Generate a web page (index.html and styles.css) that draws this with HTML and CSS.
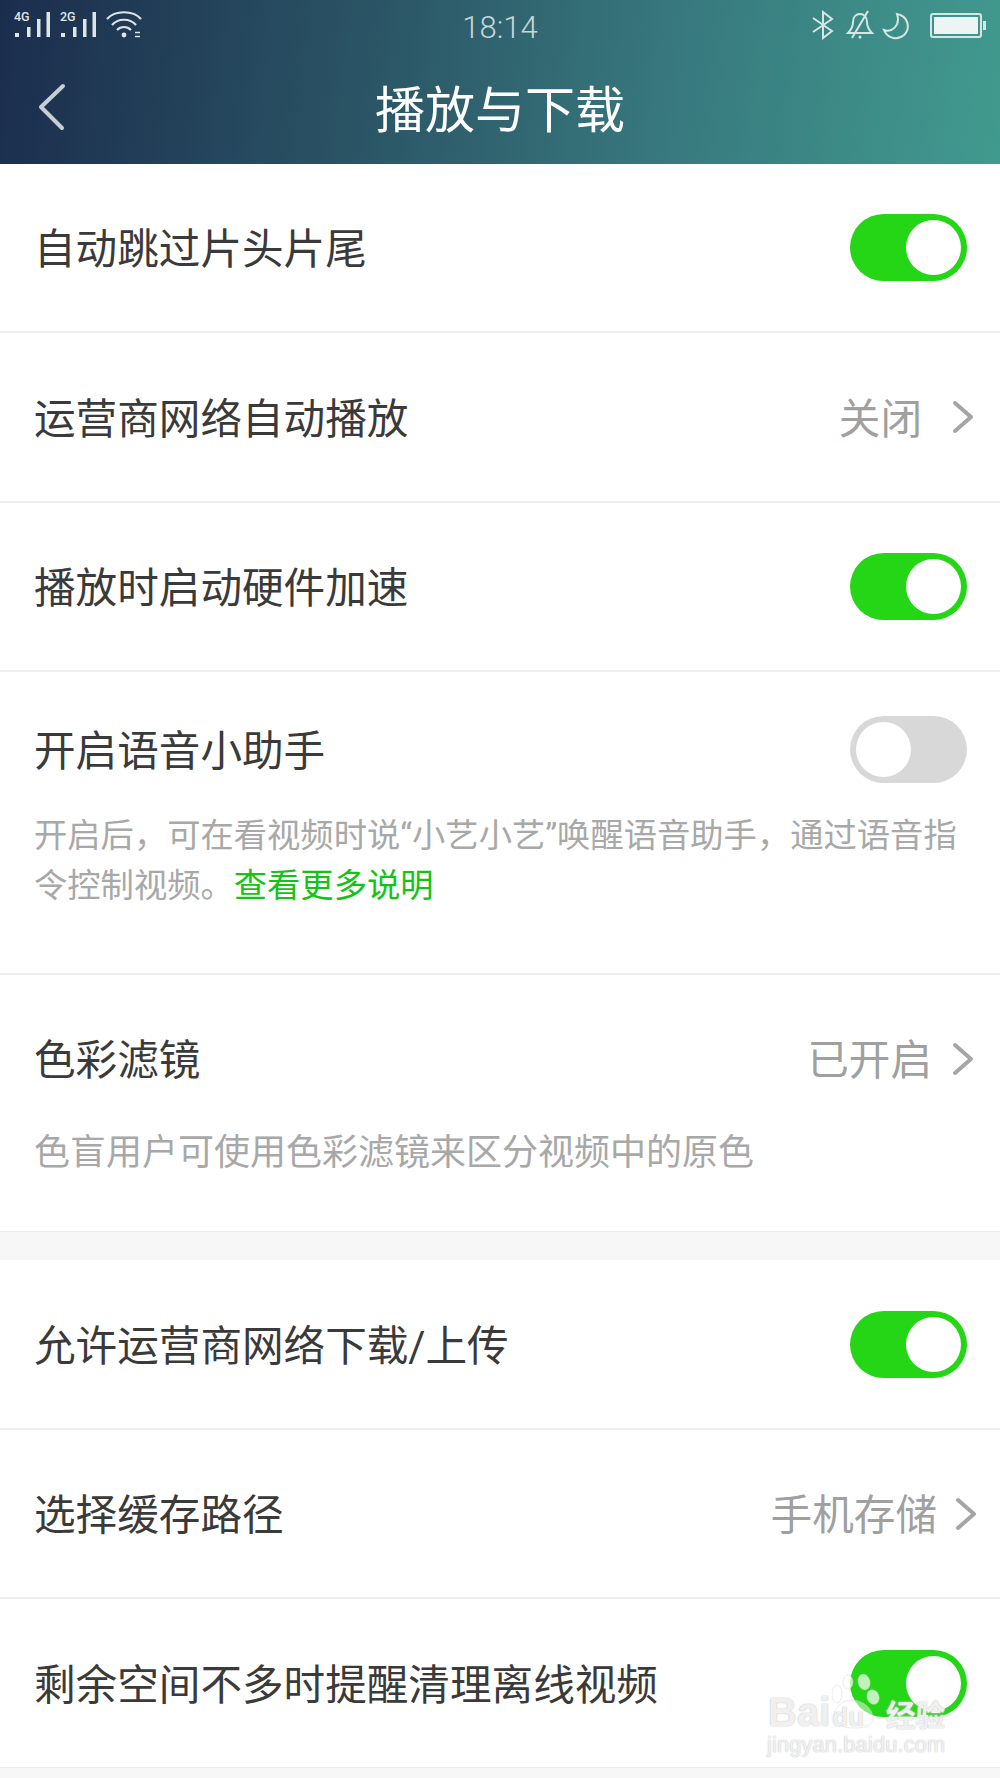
FILE: index.html
```html
<!DOCTYPE html>
<html lang="zh-CN">

<head>
    <meta charset="UTF-8" />
    <title>播放与下载</title>
    <link rel="stylesheet" href="styles.css">
</head>

<body>
    <div class="phone">
        <header class="top">
            <div class="status">
                <div class="status-side left">
                    <svg width="36" height="28" viewBox="0 0 36 28">
                        <text x="0" y="11" class="net">4G</text>
                        <g fill="#dfe4e6">
                            <rect x="1" y="23" width="4" height="4" />
                            <rect x="13" y="17" width="3.5" height="10" />
                            <rect x="23" y="9" width="3.5" height="18" />
                            <rect x="32.5" y="2" width="3.5" height="25" />
                        </g>
                    </svg>
                    <svg width="36" height="28" viewBox="0 0 36 28">
                        <text x="0" y="11" class="net">2G</text>
                        <g fill="#dfe4e6">
                            <rect x="1" y="23" width="4" height="4" />
                            <rect x="13" y="17" width="3.5" height="10" />
                            <rect x="23" y="9" width="3.5" height="18" />
                            <rect x="32.5" y="2" width="3.5" height="25" />
                        </g>
                    </svg>
                    <svg width="36" height="28" viewBox="0 0 36 28" fill="none" stroke="#dfe4e6" stroke-width="2.2">
                        <path d="M1 9 C9 0 27 0 35 9" />
                        <path d="M6 15 C12 8 24 8 30 15" />
                        <path d="M11 20 C15 16 21 16 25 20" />
                        <circle cx="18" cy="25" r="2.4" fill="#dfe4e6" stroke="none" />
                        <path d="M29 22.5 h5 M29 26.5 h5" stroke-width="1.6" />
                    </svg>
                </div>
                <div class="clock">18:14</div>
                <div class="status-side right">
                    <svg width="24" height="30" viewBox="0 0 24 30" fill="none" stroke="#d6e6e4" stroke-width="2">
                        <path d="M2 8 L21 21 L12 28 V2 L21 9 L2 22" />
                    </svg>
                    <svg class="bell" width="28" height="30" viewBox="0 0 28 30" fill="none" stroke="#d6e6e4" stroke-width="2">
                        <path d="M2 23 C6 19 7 16 7 12 C7 7 10 4 14 4 C18 4 21 7 21 12 C21 16 22 19 26 23 Z" />
                        <path d="M22 1 L6 28" />
                        <circle cx="14" cy="27" r="1.5" fill="#d6e6e4" stroke="none" />
                    </svg>
                    <svg class="moon" width="28" height="28" viewBox="0 0 28 28" fill="none" stroke="#d6e6e4" stroke-width="2">
                        <path d="M15 2 C26 4 29 16 22 23 C15 29 5 26 2 18 C9 21 19 14 15 2 Z" />
                    </svg>
                    <div class="battery"><span class="battery-fill"></span></div>
                </div>
            </div>
            <div class="nav">
                <svg class="back" width="30" height="48" viewBox="0 0 30 48" fill="none" stroke="#c6cfd3" stroke-width="4" stroke-linecap="round" stroke-linejoin="round">
                    <path d="M25 3 L3 24 L24 45" />
                </svg>
                <h1>播放与下载</h1>
            </div>
        </header>

        <section class="group">
            <div class="row">
                <span class="label">自动跳过片头片尾</span>
                <span class="switch on"></span>
            </div>
            <div class="row high">
                <span class="label">运营商网络自动播放</span>
                <span class="value">关闭</span>
                <svg class="arrow" width="22" height="34" viewBox="0 0 22 34" fill="none" stroke="#a5a5a5" stroke-width="4" stroke-linecap="round" stroke-linejoin="round"><path d="M3 3 L19 17 L3 31" /></svg>
            </div>
            <div class="row">
                <span class="label">播放时启动硬件加速</span>
                <span class="switch on"></span>
            </div>
            <div class="row tall voice">
                <div class="row-head">
                    <span class="label">开启语音小助手</span>
                    <span class="switch"></span>
                </div>
                <p class="note">开启后，可在看视频时说“小艺小艺”唤醒语音助手，通过语音指令控制视频。<a class="more">查看更多说明</a></p>
            </div>
            <div class="row tall filter">
                <div class="row-head">
                    <span class="label">色彩滤镜</span>
                    <span class="value near">已开启</span>
                    <svg class="arrow" width="22" height="34" viewBox="0 0 22 34" fill="none" stroke="#a5a5a5" stroke-width="4" stroke-linecap="round" stroke-linejoin="round"><path d="M3 3 L19 17 L3 31" /></svg>
                </div>
                <p class="note big">色盲用户可使用色彩滤镜来区分视频中的原色</p>
            </div>
        </section>

        <section class="group second">
            <div class="row high">
                <span class="label">允许运营商网络下载/上传</span>
                <span class="switch on"></span>
            </div>
            <div class="row">
                <span class="label">选择缓存路径</span>
                <span class="value nearest">手机存储</span>
                <svg class="arrow outer" width="22" height="34" viewBox="0 0 22 34" fill="none" stroke="#a5a5a5" stroke-width="4" stroke-linecap="round" stroke-linejoin="round"><path d="M3 3 L19 17 L3 31" /></svg>
            </div>
            <div class="row last">
                <span class="label">剩余空间不多时提醒清理离线视频</span>
                <span class="switch on"></span>
            </div>
        </section>

        <!-- watermark sits over the last row -->
        <div class="mark">
            <svg class="paw" width="50" height="60" viewBox="0 0 50 60" fill="#fff" fill-opacity="0.7" stroke="#ccc" stroke-opacity="0.4">
                <ellipse cx="5" cy="20" rx="5" ry="9" />
                <ellipse cx="16" cy="8" rx="5" ry="7" />
                <ellipse cx="32" cy="8" rx="6" ry="8" transform="rotate(-15 32 8)" />
                <ellipse cx="41" cy="23" rx="6" ry="7.5" transform="rotate(-20 41 23)" />
                <path fill-opacity="0.45" d="M2 42 C2 34 10 26 20 26 C30 26 41 34 41 44 C41 52 32 54 22 54 C10 54 2 50 2 42 Z" />
            </svg>
            <div class="mark-main"><span class="mark-bai">Bai</span><span class="mark-du">du</span><span class="mark-jy">经验</span></div>
            <div class="mark-url">jingyan.baidu.com</div>
        </div>
    </div>
</body>

</html>
```

FILE: styles.css
```css
* {
    box-sizing: border-box;
    margin: 0;
    padding: 0;
}

body {
    font-family: 'Roboto', 'Noto Sans CJK SC', sans-serif;
    background-color: #f7f7f7;
    color: #3a3a3a;
}

.phone {
    position: relative;
    width: 1000px;
    height: 1778px;
    overflow: hidden;
    background-color: #f7f7f7;
}

/* Top bar */
.top {
    height: 164px;
    background: linear-gradient(97deg, #1b2d4d 0%, #2b5666 38%, #387a7f 68%, #419a8e 100%);
    color: #fff;
}

.status {
    height: 52px;
    padding: 10px 15px 0 14px;
    display: flex;
    justify-content: space-between;
    align-items: flex-start;
}

.status-side {
    display: flex;
    align-items: flex-start;
}

.status-side.left {
    gap: 10px;
}

.status-side.right {
    gap: 8px;
}

.net {
    font-family: 'Roboto', sans-serif;
    font-size: 12.5px;
    font-weight: 500;
    fill: #dfe4e6;
}

.clock {
    position: absolute;
    left: 0;
    right: 0;
    top: 9px;
    text-align: center;
    font-size: 31px;
    font-weight: 300;
    color: #c9d6d8;
}

.bell {
    margin-left: 3px;
}

.moon {
    margin-top: 2px;
}

.battery {
    width: 52px;
    height: 25px;
    margin: 3px 3px 0 12px;
    border: 2px solid #d6e6e4;
    border-radius: 3px;
    padding: 2px;
    position: relative;
}

.battery::after {
    content: '';
    position: absolute;
    right: -6px;
    top: 6px;
    width: 3px;
    height: 9px;
    background-color: #d6e6e4;
}

.battery-fill {
    display: block;
    height: 100%;
    background-color: #edf5f4;
}

.nav {
    height: 112px;
    display: flex;
    align-items: center;
    justify-content: center;
    position: relative;
}

.back {
    position: absolute;
    left: 38px;
    top: 31px;
}

.nav h1 {
    font-size: 50px;
    font-weight: 400;
    margin-top: -4px;
}

/* Rows */
.group {
    background-color: #fff;
    border-bottom: 1px solid #ececec;
}

.second {
    margin-top: 28px;
}

.row {
    height: 169px;
    padding: 0 34px;
    display: flex;
    align-items: center;
    border-bottom: 2px solid #efefef;
}

.row.high {
    height: 170px;
}

.row.last {
    height: 168px;
    border-bottom: none;
}

.row.tall {
    display: block;
}

.voice {
    height: 303px;
    padding-top: 44px;
}

.filter {
    height: 256px;
    padding-top: 50px;
    border-bottom: none;
}

.row-head {
    display: flex;
    align-items: center;
    height: 67px;
}

.label {
    flex: 1;
    font-size: 41.6px;
    color: #3a3a3a;
    white-space: nowrap;
    margin-bottom: 3px;
}

.value {
    font-size: 41.6px;
    color: #a0a0a0;
    margin-right: 30px;
    margin-bottom: 3px;
}

.value.near {
    margin-right: 20px;
}

.value.nearest {
    margin-right: 18px;
}

.arrow {
    margin-right: -8px;
}

.arrow.outer {
    margin-right: -11px;
}

.note {
    font-size: 33.3px;
    line-height: 50px;
    color: #a8a8a8;
    margin-top: 28px;
}

.note.big {
    font-size: 36px;
    margin-top: 36px;
}

.more {
    color: #14c414;
}

/* Switch */
.switch {
    position: relative;
    flex: none;
    width: 117px;
    height: 67px;
    margin-right: -1px;
    border-radius: 34px;
    background-color: #d8d8d8;
}

.switch::after {
    content: '';
    position: absolute;
    left: 6px;
    top: 6px;
    width: 55px;
    height: 55px;
    border-radius: 50%;
    background-color: #fff;
}

.switch.on {
    background-color: #25d616;
}

.switch.on::after {
    left: 56px;
}

/* Watermark */
.mark {
    position: absolute;
    left: 766px;
    top: 1669px;
    width: 190px;
    height: 100px;
    color: rgba(255, 255, 255, 0.8);
    text-shadow: 0 0 1px #bbb, 0 0 2px #ddd;
}

.paw {
    position: absolute;
    left: 66px;
    top: 5px;
}

.mark-main {
    position: absolute;
    left: 2px;
    top: 25px;
    white-space: nowrap;
    font-size: 40px;
    line-height: 36px;
    font-family: 'Liberation Sans', sans-serif;
    font-weight: 700;
}

.mark-du {
    font-size: 26px;
    margin-left: 2px;
}

.mark-jy {
    font-family: 'Noto Sans CJK SC', sans-serif;
    font-size: 29.5px;
    line-height: 36px;
    margin-left: 22px;
}

.mark-url {
    position: absolute;
    left: 1px;
    top: 65px;
    font-family: 'Liberation Sans', sans-serif;
    font-size: 21.7px;
    line-height: 22px;
    letter-spacing: 0.2px;
    white-space: nowrap;
}
```
